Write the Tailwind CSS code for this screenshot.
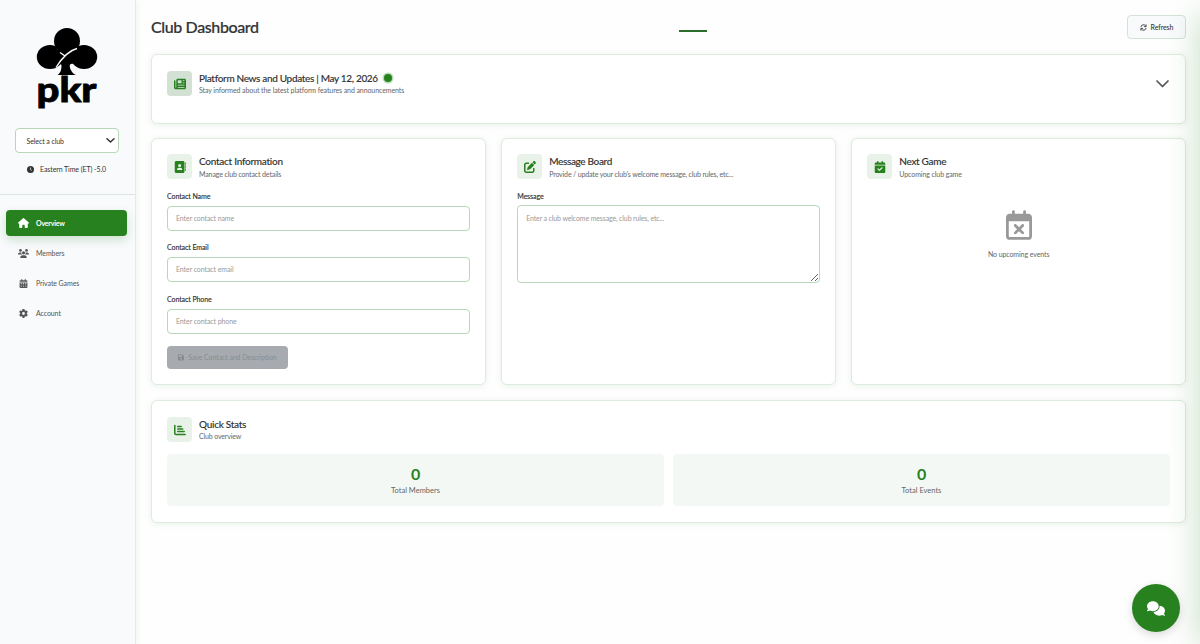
<!DOCTYPE html>
<html lang="en">
<head>
    <meta charset="UTF-8">
    <meta name="viewport" content="width=device-width, initial-scale=1.0">
    <title>Club Dashboard</title>
    <script src="https://cdn.jsdelivr.net/npm/@tailwindcss/browser@4"></script>
</head>
<body class="relative flex h-screen overflow-hidden bg-[#fefefe] font-['Lato',sans-serif] text-[7px] leading-[10px] tracking-[-0.09px] text-[#333]">

    <!-- Sidebar -->
    <aside class="w-[136px] shrink-0 border-r border-[#e3ebe8] bg-[#f8fafc] shadow-[1px_0_6px_rgba(40,130,30,0.08)]">
        <div class="flex h-[195px] flex-col items-center border-b border-[#dde5e5] pt-[27px]">
            <svg class="mr-[2px] h-[82px] w-[62px] tracking-normal text-black" viewBox="0 0 62 82" fill="currentColor">
                <circle cx="31" cy="14" r="13"/>
                <ellipse cx="14" cy="30" rx="13.200" ry="12"/>
                <ellipse cx="48" cy="30" rx="13.200" ry="12"/>
                <path d="M21 22h20v12l-3 3c-3-1-5 0-4 4 1 3 3 6 6 7H21.500c3-2 4-5 4-10l-4-4z"/>
                <path d="M20 40.500C24 34 31 24 41 21.500M24 25.500l5 3.500" fill="none" stroke="#f8fafc" stroke-width="1.400"/>
                <text x="0.500" y="75" font-family="Lato, sans-serif" font-size="35" font-weight="900" stroke="currentColor" stroke-width=".8" textLength="60" lengthAdjust="spacingAndGlyphs">pkr</text>
            </svg>
            <div class="mt-[19px] mr-[2px] flex h-[25px] w-[104px] items-center justify-between rounded border border-[#b8d6b8] bg-white pr-[3px] pl-[11px]">
                <span>Select a club</span>
                <svg class="h-[5px] w-[9px]" viewBox="0 0 9 5" fill="none" stroke="#333" stroke-width="1.500" stroke-linecap="round" stroke-linejoin="round"><path d="M1 .8 4.500 4 8 .8"/></svg>
            </div>
            <div class="mt-[11px] mr-[2px] flex items-center gap-[6px]">
                <svg class="h-[7px] w-[7px]" viewBox="0 0 14 14"><circle cx="7" cy="7" r="7" fill="#333"/><path d="M7 3v4l2.500 2" fill="none" stroke="#f8fafc" stroke-width="1.500"/></svg>
                <span>Eastern Time (ET) -5.0</span>
            </div>
        </div>
        <nav class="flex flex-col gap-[4px] pt-[15px] pr-[8px] pl-[6px] text-[#555]">
            <a class="flex h-[26px] items-center gap-[7px] rounded bg-[#27811f] pl-[12px] font-bold tracking-[-0.2px] text-white shadow-[0_4px_10px_rgba(40,130,30,0.2)]">
                <svg class="h-[10px] w-[11px]" viewBox="0 0 576 512" fill="currentColor"><path d="M575.8 255.5c0 18-15 32.1-32 32.1h-32l.7 160.2c0 2.700-.2 5.400-.5 8.100V472c0 22.100-17.900 40-40 40H392c-22.100 0-40-17.900-40-40V384c0-17.700-14.300-32-32-32H256c-17.700 0-32 14.300-32 32v88c0 22.100-17.900 40-40 40H104c-22.100 0-40-17.900-40-40V287.600H32c-18 0-32-14-32-32.100c0-9 3-17 10-24L266.400 8c7-7 15-8 22-8s15 2 21 7L564.800 231.500c8 7 12 15 11 24z"/></svg>
                <span>Overview</span>
            </a>
            <a class="flex h-[26px] items-center gap-[7px] pl-[12px]">
                <svg class="h-[9px] w-[11px]" viewBox="0 0 640 512" fill="currentColor"><circle cx="144" cy="80" r="80"/><circle cx="496" cy="80" r="80"/><circle cx="320" cy="216" r="92"/><path d="M0 299c0-59 48-107 107-107h42c17 0 32 4 46 10-9 48 5 84 38 118H21c-12 0-21-9-21-21zM640 299c0-59-48-107-107-107h-42c-17 0-32 4-46 10 9 48-5 84-38 118h212c12 0 21-9 21-21zM128 485c0-74 60-133 133-133h118c74 0 133 60 133 133 0 15-12 27-27 27H155c-15 0-27-12-27-27z"/></svg>
                <span>Members</span>
            </a>
            <a class="flex h-[26px] items-center gap-[7px] pl-[12px]">
                <svg class="h-[9px] w-[11px]" viewBox="0 0 448 512" fill="currentColor"><path fill-rule="evenodd" d="M96 32a32 32 0 0 1 64 0v32h128V32a32 32 0 0 1 64 0v32h48c26 0 48 22 48 48v48H0v-48c0-26 22-48 48-48h48zM0 192h448v272c0 26-22 48-48 48H48c-26 0-48-22-48-48zM64 248v44h64v-44zM192 248v44h64v-44zM320 248v44h64v-44zM64 388v44h64v-44zM192 388v44h64v-44zM320 388v44h64v-44z"/></svg>
                <span>Private Games</span>
            </a>
            <a class="flex h-[26px] items-center gap-[7px] pl-[12px]">
                <svg class="h-[9px] w-[11px]" viewBox="0 0 512 512" fill="currentColor"><path d="M495.9 166.6c3.2 8.7 .5 18.4-6.4 24.6l-43.3 39.4c1.1 8.3 1.7 16.8 1.7 25.4s-.6 17.1-1.7 25.4l43.3 39.4c6.9 6.2 9.6 15.9 6.4 24.6c-4.400 11.900-9.700 23.300-15.800 34.300l-4.700 8.100c-6.600 11-14 21.400-22.100 31.200c-5.900 7.200-15.700 9.600-24.500 6.800l-55.700-17.700c-13.400 10.300-28.200 18.900-44 25.400l-12.500 57.100c-2 9.100-9 16.300-18.200 17.800c-13.800 2.300-28 3.500-42.500 3.500s-28.700-1.200-42.500-3.500c-9.200-1.500-16.200-8.700-18.200-17.800l-12.500-57.100c-15.800-6.500-30.600-15.100-44-25.400L83.100 425.900c-8.800 2.800-18.600 .3-24.500-6.800c-8.100-9.800-15.500-20.200-22.100-31.200l-4.700-8.100c-6.100-11-11.400-22.400-15.800-34.300c-3.200-8.700-.5-18.400 6.400-24.600l43.300-39.400C64.600 273.100 64 264.600 64 256s.6-17.100 1.700-25.400L22.400 191.200c-6.900-6.200-9.600-15.900-6.400-24.600c4.400-11.900 9.700-23.300 15.800-34.300l4.700-8.100c6.600-11 14-21.400 22.100-31.200c5.900-7.200 15.700-9.600 24.500-6.800l55.700 17.700c13.400-10.300 28.200-18.900 44-25.400l12.500-57.100c2-9.100 9-16.300 18.200-17.800C227.300 1.200 241.500 0 256 0s28.700 1.200 42.500 3.500c9.200 1.500 16.200 8.700 18.200 17.800l12.500 57.100c15.800 6.500 30.600 15.100 44 25.400l55.700-17.700c8.800-2.800 18.600-.3 24.500 6.800c8.100 9.800 15.500 20.200 22.100 31.200l4.700 8.100c6.100 11 11.400 22.400 15.800 34.300zM256 336a80 80 0 1 0 0-160 80 80 0 1 0 0 160z"/></svg>
                <span>Account</span>
            </a>
        </nav>
    </aside>

    <main class="flex-1 pr-[14px] pl-[15px]">
        <header class="flex h-[54px] items-center">
            <h1 class="w-[528px] text-[16px] leading-5 font-medium tracking-[-0.38px] [-webkit-text-stroke:0.2px]">Club Dashboard</h1>
            <div class="mt-[7px] h-[2px] w-[28px] bg-[#2c6e2c]"></div>
            <button class="ml-auto flex h-[24px] w-[59px] items-center justify-center gap-[4px] rounded border border-[#d3e2d6] bg-[#f8fafc] font-medium">
                <svg class="h-[7px] w-[7px]" viewBox="0 0 16 16" fill="none" stroke="#333" stroke-width="2"><path d="M2 7a6 6 0 0 1 11-2.500M14 9a6 6 0 0 1-11 2.500M14 1v5H9M2 15v-5h5"/></svg>
                Refresh
            </button>
        </header>

        <!-- News -->
        <section class="flex h-[70px] items-start rounded-md border border-[#deebdf] bg-[#fefffe] pt-[16px] pr-[16px] pl-[15px] shadow-[0_1px_6px_rgba(40,130,30,0.1)]">
            <div class="flex h-[25px] w-[25px] items-center justify-center rounded bg-[#d3e0d4]">
                <svg class="h-[12px] w-[12px]" viewBox="0 0 512 512" fill="#27811f"><path d="M96 96c0-35.300 28.700-64 64-64H448c35.300 0 64 28.700 64 64V416c0 35.300-28.700 64-64 64H80c-44.200 0-80-35.800-80-80V128c0-17.700 14.300-32 32-32s32 14.300 32 32V400c0 8.800 7.200 16 16 16s16-7.200 16-16V96zm64 24v80c0 13.300 10.700 24 24 24H296c13.300 0 24-10.700 24-24V120c0-13.300-10.700-24-24-24H184c-13.300 0-24 10.700-24 24zm208-8c0 8.800 7.200 16 16 16h48c8.800 0 16-7.200 16-16s-7.200-16-16-16H384c-8.800 0-16 7.200-16 16zm0 96c0 8.800 7.200 16 16 16h48c8.800 0 16-7.200 16-16s-7.200-16-16-16H384c-8.800 0-16 7.200-16 16zM160 304c0 8.800 7.200 16 16 16H432c8.800 0 16-7.200 16-16s-7.200-16-16-16H176c-8.800 0-16 7.200-16 16zm0 96c0 8.800 7.200 16 16 16H432c8.800 0 16-7.200 16-16s-7.200-16-16-16H176c-8.800 0-16 7.200-16 16z"/></svg>
            </div>
            <div class="ml-[7px] flex-1">
                <h2 class="flex items-center text-[10px] leading-[14px] font-medium tracking-[-0.33px] [-webkit-text-stroke:0.1px]">Platform News and Updates | May 12, 2026<span class="ml-[6px] h-[8px] w-[8px] rounded-full bg-[#27811f] shadow-[0_0_0_1.5px_#b9dcb8]"></span></h2>
                <p class="text-[#666]">Stay informed about the latest platform features and announcements</p>
            </div>
            <svg class="mt-[9px] h-[8px] w-[13px]" viewBox="0 0 13 8" fill="none" stroke="#555" stroke-width="1.700" stroke-linecap="round" stroke-linejoin="round"><path d="M1 1l5.500 5.500L12 1"/></svg>
        </section>

        <div class="mt-[14px] grid h-[247px] grid-cols-3 gap-[15.5px]">
            <!-- Contact -->
            <section class="rounded-md border border-[#deebdf] bg-[#fefffe] px-[15px] pt-[15px] shadow-[0_1px_6px_rgba(40,130,30,0.1)]">
                <div class="flex gap-[7px]">
                    <div class="flex h-[25px] w-[25px] items-center justify-center rounded bg-[#e9f2e9]">
                        <svg class="h-[12px] w-[12px]" viewBox="0 0 512 512" fill="#27811f"><path d="M96 0C60.700 0 32 28.700 32 64V448c0 35.300 28.700 64 64 64H384c35.300 0 64-28.700 64-64V64c0-35.300-28.700-64-64-64H96zM208 288h64c44.200 0 80 35.800 80 80c0 8.800-7.200 16-16 16H144c-8.800 0-16-7.200-16-16c0-44.200 35.800-80 80-80zm-32-96a64 64 0 1 1 128 0 64 64 0 1 1 -128 0zM480 64h32v96h-32zM480 192h32v96h-32zM480 320h32v96h-32z"/></svg>
                    </div>
                    <div>
                        <h2 class="text-[10px] leading-[15px] font-medium tracking-[-0.27px] [-webkit-text-stroke:0.1px]">Contact Information</h2>
                        <p class="tracking-[-0.13px] text-[#666]">Manage club contact details</p>
                    </div>
                </div>
                <label class="mt-[12px] block font-medium [-webkit-text-stroke:0.1px]">Contact Name</label>
                <input class="mt-[5px] block h-[25px] w-full rounded border border-[#b8d6b8] bg-white px-[8px] pb-[2px] placeholder:text-[#999]" placeholder="Enter contact name">
                <label class="mt-[11px] block font-medium [-webkit-text-stroke:0.1px]">Contact Email</label>
                <input class="mt-[5px] block h-[25px] w-full rounded border border-[#b8d6b8] bg-white px-[8px] pb-[1px] placeholder:text-[#999]" placeholder="Enter contact email">
                <label class="mt-[12px] block font-medium [-webkit-text-stroke:0.1px]">Contact Phone</label>
                <input class="mt-[5px] block h-[25px] w-full rounded border border-[#b8d6b8] bg-white px-[8px] pb-[2px] placeholder:text-[#999]" placeholder="Enter contact phone">
                <button class="mt-[12px] flex h-[23px] w-[121px] items-center justify-center gap-[4px] rounded bg-[#a7abb0] pb-[1px] text-[#878b8f]" disabled>
                    <svg class="h-[7px] w-[6px]" viewBox="0 0 448 512" fill="currentColor"><path d="M64 32C28.700 32 0 60.700 0 96V416c0 35.300 28.700 64 64 64H384c35.300 0 64-28.700 64-64V173.300c0-17-6.700-33.300-18.700-45.300L352 50.700C340 38.700 323.700 32 306.700 32H64zm0 96c0-17.700 14.300-32 32-32H288c17.700 0 32 14.300 32 32v64c0 17.700-14.300 32-32 32H96c-17.700 0-32-14.300-32-32V128zM224 288a64 64 0 1 1 0 128 64 64 0 1 1 0-128z"/></svg>
                    Save Contact and Description
                </button>
            </section>

            <!-- Message board -->
            <section class="rounded-md border border-[#deebdf] bg-[#fefffe] px-[15px] pt-[15px] shadow-[0_1px_6px_rgba(40,130,30,0.1)]">
                <div class="flex gap-[7px]">
                    <div class="flex h-[25px] w-[25px] items-center justify-center rounded bg-[#e9f2e9]">
                        <svg class="h-[12px] w-[12px]" viewBox="0 0 512 512" fill="#27811f"><path d="M471.600 21.700c-21.900-21.900-57.300-21.900-79.200 0L362.300 51.700l97.900 97.900 30.100-30.100c21.900-21.900 21.900-57.300 0-79.200L471.600 21.700zm-299.200 220c-6.100 6.100-10.800 13.600-13.500 21.900l-29.600 88.800c-2.900 8.600-.6 18.100 5.800 24.600s15.900 8.700 24.600 5.800l88.800-29.600c8.200-2.700 15.700-7.400 21.900-13.500L437.700 172.300 339.700 74.300 172.400 241.700zM96 64C43 64 0 107 0 160V416c0 53 43 96 96 96H352c53 0 96-43 96-96V320c0-17.700-14.300-32-32-32s-32 14.300-32 32v96c0 17.700-14.300 32-32 32H96c-17.700 0-32-14.300-32-32V160c0-17.700 14.300-32 32-32h96c17.700 0 32-14.300 32-32s-14.300-32-32-32H96z"/></svg>
                    </div>
                    <div>
                        <h2 class="text-[10px] leading-[15px] font-medium tracking-[-0.35px] [-webkit-text-stroke:0.1px]">Message Board</h2>
                        <p class="tracking-[-0.15px] text-[#666]">Provide / update your club's welcome message, club rules, etc...</p>
                    </div>
                </div>
                <label class="mt-[12px] block font-medium [-webkit-text-stroke:0.1px]">Message</label>
                <textarea class="mt-[4px] block h-[78px] w-full rounded border border-[#b8d6b8] bg-white px-[8px] py-[7px] tracking-[-0.13px] placeholder:text-[#999]" placeholder="Enter a club welcome message, club rules, etc..."></textarea>
            </section>

            <!-- Next game -->
            <section class="rounded-md border border-[#deebdf] bg-[#fefffe] px-[15px] pt-[15px] shadow-[0_1px_6px_rgba(40,130,30,0.1)]">
                <div class="flex gap-[7px]">
                    <div class="flex h-[25px] w-[25px] items-center justify-center rounded bg-[#e9f2e9]">
                        <svg class="h-[12px] w-[12px]" viewBox="0 0 448 512" fill="#27811f"><path d="M128 0c17.700 0 32 14.300 32 32V64H288V32c0-17.700 14.300-32 32-32s32 14.300 32 32V64h48c26.500 0 48 21.500 48 48v48H0V112C0 85.500 21.500 64 48 64H96V32c0-17.700 14.300-32 32-32zM0 192H448V464c0 26.500-21.500 48-48 48H48c-26.500 0-48-21.500-48-48V192zM329 305c9.400-9.400 9.400-24.600 0-33.900s-24.600-9.400-33.900 0l-95 95-47-47c-9.400-9.400-24.600-9.400-33.900 0s-9.400 24.600 0 33.900l64 64c9.400 9.400 24.600 9.400 33.900 0L329 305z"/></svg>
                    </div>
                    <div>
                        <h2 class="text-[10px] leading-[15px] font-medium tracking-[-0.33px] [-webkit-text-stroke:0.1px]">Next Game</h2>
                        <p class="text-[#666]">Upcoming club game</p>
                    </div>
                </div>
                <div class="mt-[31px] flex flex-col items-center">
                    <svg class="h-[30px] w-[26px]" viewBox="0 0 448 512" fill="#999"><path d="M128 0c13.300 0 24 10.700 24 24V64H296V24c0-13.300 10.700-24 24-24s24 10.700 24 24V64h40c35.300 0 64 28.700 64 64V448c0 35.300-28.700 64-64 64H64c-35.300 0-64-28.700-64-64V128C0 92.700 28.700 64 64 64h40V24c0-13.300 10.700-24 24-24zM400 192H48V448c0 8.800 7.200 16 16 16H384c8.800 0 16-7.200 16-16V192zm-95 89l-47 47 47 47c9.400 9.400 9.400 24.600 0 33.900s-24.600 9.400-33.900 0l-47-47-47 47c-9.400 9.400-24.600 9.400-33.900 0s-9.400-24.600 0-33.900l47-47-47-47c-9.400-9.400-9.400-24.600 0-33.900s24.600-9.400 33.900 0l47 47 47-47c9.400-9.400 24.600-9.400 33.900 0s9.400 24.600 0 33.900z"/></svg>
                    <p class="mt-[9px] text-[#666]">No upcoming events</p>
                </div>
            </section>
        </div>

        <!-- Stats -->
        <section class="mt-[15px] h-[123px] rounded-md border border-[#deebdf] bg-[#fefffe] px-[15px] pt-[16px] shadow-[0_1px_6px_rgba(40,130,30,0.1)]">
            <div class="flex gap-[7px]">
                <div class="flex h-[25px] w-[25px] items-center justify-center rounded bg-[#e9f2e9]">
                    <svg class="h-[12px] w-[12px]" viewBox="0 0 12 12" fill="none" stroke="#27811f" stroke-width="1.500" stroke-linecap="round"><path d="M.8 1.500v8q0 1 1 1h9.400M3.700 2.500h3.500M3.700 5h5M3.700 7.500h6.500"/></svg>
                </div>
                <div>
                    <h2 class="text-[10px] leading-[14px] font-medium tracking-[-0.27px] [-webkit-text-stroke:0.1px]">Quick Stats</h2>
                    <p class="tracking-[-0.15px] text-[#666]">Club overview</p>
                </div>
            </div>
            <div class="mt-[12px] grid grid-cols-2 gap-[9px]">
                <div class="flex h-[52px] flex-col items-center rounded bg-[#f4f8f4] pt-[11px]">
                    <span class="text-[16px] leading-[18px] font-bold text-[#27811f]">0</span>
                    <span class="mt-[3px] text-[7.500px] tracking-normal text-[#666]">Total Members</span>
                </div>
                <div class="flex h-[52px] flex-col items-center rounded bg-[#f4f8f4] pt-[11px]">
                    <span class="text-[16px] leading-[18px] font-bold text-[#27811f]">0</span>
                    <span class="mt-[3px] text-[7.500px] tracking-normal text-[#666]">Total Events</span>
                </div>
            </div>
        </section>
    </main>

    <!-- Edge glow -->
    <div class="pointer-events-none absolute top-[14px] -right-[20px] bottom-0 w-[20px] shadow-[0_0_30px_rgba(40,130,30,0.3)]"></div>

    <!-- Chat button -->
    <button class="absolute right-[20px] bottom-[12px] flex h-[48px] w-[48px] items-center justify-center rounded-full bg-[#27811f] shadow-[0_3px_10px_rgba(0,0,0,0.15)]">
        <svg class="h-[15px] w-[18px]" viewBox="0 0 640 512" fill="#fff"><path d="M208 352c114.900 0 208-78.800 208-176S322.900 0 208 0S0 78.800 0 176c0 38.600 14.700 74.300 39.600 103.400c-3.500 9.400-8.700 17.700-14.200 24.700c-4.800 6.200-9.700 11-13.300 14.300c-1.800 1.600-3.300 2.900-4.300 3.700l-1.300 1C1 327.200-1.400 334.400 .8 340.900S9.100 352 16 352c21.800 0 43.800-5.600 62.100-12.500c9.200-3.500 17.800-7.400 25.200-11.400C134.100 343.300 169.800 352 208 352zM448 176c0 112.300-99.100 196.900-216.500 207C255.800 457.400 336.400 512 432 512c38.200 0 73.900-8.700 104.700-23.900c7.500 4 16 7.900 25.200 11.400c18.300 6.900 40.300 12.500 62.100 12.500c6.900 0 13.100-4.500 15.200-11.100c2.100-6.600-.2-13.800-5.800-17.900l-1.300-1c-1-.8-2.500-2-4.300-3.700c-3.600-3.300-8.500-8.100-13.300-14.300c-5.500-7-10.700-15.400-14.200-24.700c24.900-29 39.600-64.700 39.600-103.400c0-92.800-84.900-168.900-192.600-175.500c.4 5.100 .6 10.300 .6 15.500z"/></svg>
    </button>
</body>
</html>
